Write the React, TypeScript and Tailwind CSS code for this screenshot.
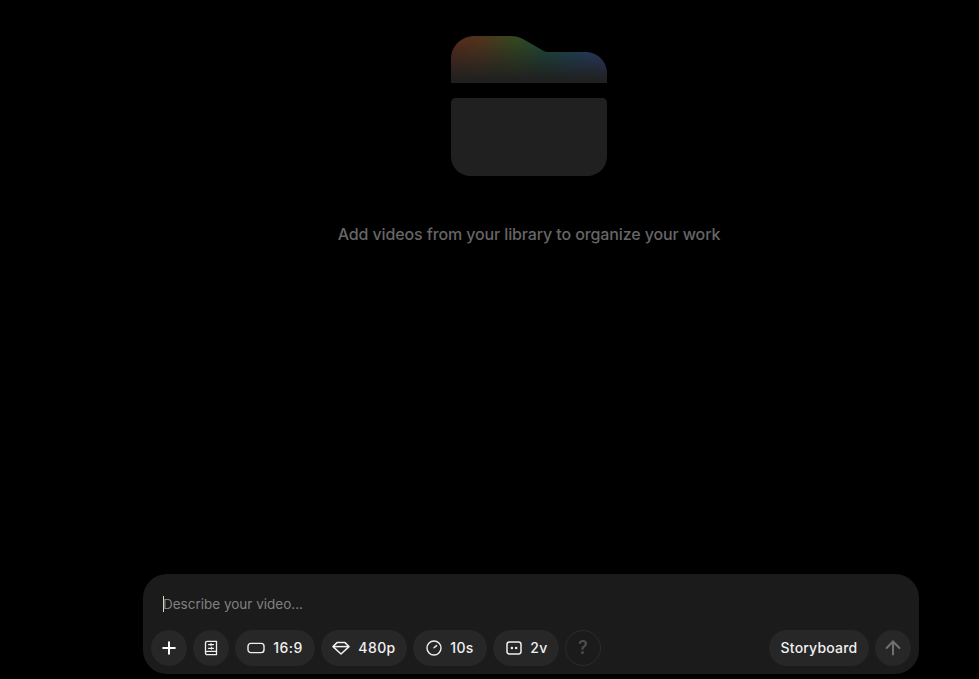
import React from "react";
import { Plus, ArrowUp } from "lucide-react";

const tabPath = "M0 47V24C0 10 10 0 24 0H60C65 0 68 1 72 3L91 14C93 15.4 95 16 98 16H134C147 16 156 26 156 38V47Z";

const FolderArt = () => (
  <svg width="156" height="140" viewBox="0 0 156 140" fill="none">
    <defs>
      <linearGradient id="fade" x1="0" y1="3" x2="0" y2="44" gradientUnits="userSpaceOnUse">
        <stop offset="0" stopColor="#202020" stopOpacity="0" />
        <stop offset="1" stopColor="#202020" stopOpacity="1" />
      </linearGradient>
      <linearGradient id="rainbow" x1="0" y1="0" x2="156" y2="12" gradientUnits="userSpaceOnUse">
        <stop offset="0" stopColor="#562a1b" />
        <stop offset="0.2" stopColor="#50341c" />
        <stop offset="0.42" stopColor="#33471f" />
        <stop offset="0.62" stopColor="#1b4a3c" />
        <stop offset="0.8" stopColor="#1f4560" />
        <stop offset="1" stopColor="#2c3c78" />
      </linearGradient>
    </defs>
    <path d={tabPath} fill="url(#rainbow)" />
    <path d={tabPath} fill="url(#fade)" />
    <path
      d="M0 67C0 64 2 62 5 62H151C154 62 156 64 156 67V120C156 132 147 140 136 140H20C9 140 0 132 0 120Z"
      fill="#202020"
    />
  </svg>
);

const BookIcon = () => (
  <svg width="16" height="16" viewBox="0 0 16 16" fill="none" stroke="#f0f0f0" strokeWidth="1.3" strokeLinecap="round" strokeLinejoin="round">
    <path d="M2.5 13V3C2.5 2 3.2 1.3 4.2 1.3H13.5V14.7H4.2C3.2 14.7 2.5 14 2.5 13C2.5 12 3.2 11.4 4.2 11.4H13.5" />
    <path d="M5.5 4.6H10.5M5.5 8.3H10.5" />
    <path d="M8 3.4V5.6M8.6 7.2V9.3" strokeWidth="1" />
  </svg>
);

const RatioIcon = () => (
  <svg width="18" height="18" viewBox="0 0 18 18" fill="none" stroke="#f0f0f0" strokeWidth="1.4">
    <rect x="1" y="4.4" width="16" height="9.2" rx="2.8" />
  </svg>
);

const DiamondIcon = () => (
  <svg width="18" height="18" viewBox="0 0 18 18" fill="none" stroke="#f0f0f0" strokeWidth="1.5" strokeLinejoin="round">
    <path d="M5 3.6H13L17 7.6L9 15L1 7.6Z" />
    <path d="M1 7.6H17" />
  </svg>
);

const TimerIcon = () => (
  <svg width="16" height="16" viewBox="0 0 16 16" fill="none" stroke="#f0f0f0" strokeWidth="1.4" strokeLinecap="round">
    <circle cx="8" cy="8" r="7" />
    <path d="M8 7.8L10.6 5.6" />
  </svg>
);

const VersionsIcon = () => (
  <svg width="16" height="16" viewBox="0 0 16 16" fill="none">
    <rect x="1" y="2" width="14" height="12" rx="2.4" stroke="#f0f0f0" strokeWidth="1.5" />
    <circle cx="5.9" cy="8" r="1.25" fill="#f0f0f0" />
    <circle cx="10.1" cy="8" r="1.25" fill="#f0f0f0" />
  </svg>
);

const Pill = ({ icon, label, width }: { icon: React.ReactNode; label: string; width: string }) => (
  <button className={`h-9 ${width} rounded-full bg-[#272727] flex items-center justify-center gap-2 text-sm font-medium tracking-[0.4px] text-[#f0f0f0]`}>
    {icon}
    <span>{label}</span>
  </button>
);

export default function App() {
  return (
    <div className="w-full h-screen bg-black flex flex-col overflow-hidden font-['Inter',sans-serif]">
      <div className="flex-1 flex flex-col items-center pt-9 pl-[79px]">
        <FolderArt />
        <p className="mt-[46px] text-base leading-6 font-medium tracking-[-0.12px] text-[#666666]">
          Add videos from your library to organize your work
        </p>
      </div>

      <div className="ml-[143px] mb-[5px] w-[776px] h-[100px] rounded-[24px] bg-[#1b1b1b] px-2 pb-2 flex flex-col justify-end">
        <div className="flex-1 pl-3 pt-[21px]">
          <div className="flex items-center h-[18px] text-[13.5px] text-[#808080]">
            <span className="w-px h-4 bg-[#d8d8d8] -mr-px" />
            <span>Describe your video...</span>
          </div>
        </div>
        <div className="flex items-center gap-1.5">
          <button className="w-9 h-9 rounded-full bg-[#272727] flex items-center justify-center text-white">
            <Plus size={20} strokeWidth={2.4} />
          </button>
          <button className="w-9 h-9 rounded-full bg-[#272727] flex items-center justify-center">
            <BookIcon />
          </button>
          <Pill icon={<RatioIcon />} label="16:9" width="w-20" />
          <Pill icon={<DiamondIcon />} label="480p" width="w-[86px]" />
          <Pill icon={<TimerIcon />} label="10s" width="w-[74px]" />
          <Pill icon={<VersionsIcon />} label="2v" width="w-[66px] pl-0.5" />
          <button className="w-9 h-9 rounded-full border border-[#2c2c2c] flex items-center justify-center text-lg font-semibold text-[#4c4c4c]">
            ?
          </button>
          <div className="flex-1" />
          <button className="w-[100px] h-9 rounded-full bg-[#272727] text-sm font-medium tracking-[0.2px] text-[#f0f0f0]">
            Storyboard
          </button>
          <button className="w-9 h-9 rounded-full bg-[#272727] flex items-center justify-center text-[#707070]">
            <ArrowUp size={22} strokeWidth={2.2} />
          </button>
        </div>
      </div>
    </div>
  );
}
